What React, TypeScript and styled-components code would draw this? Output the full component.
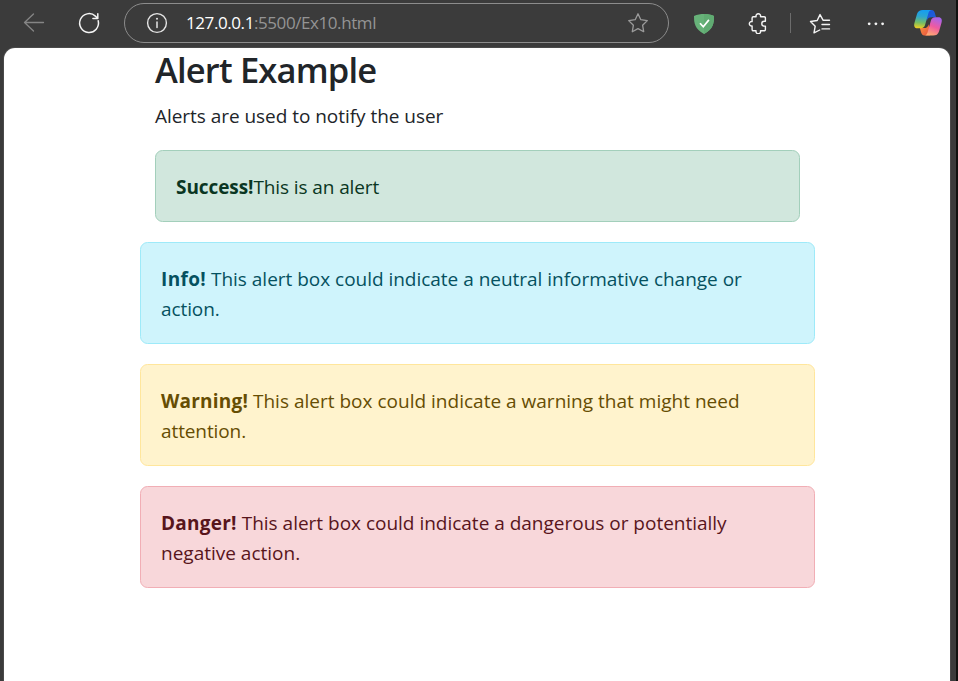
import React from "react";
import styled, { createGlobalStyle, css } from "styled-components";

const GlobalStyle = createGlobalStyle`
  *, *::before, *::after { box-sizing: border-box; }
  body {
    margin: 0;
    background: #3b3b3b;
    overflow: hidden;
    font-family: "Open Sans", "Noto Sans", sans-serif;
  }
`;

const Window = styled.div`
  display: flex;
  flex-direction: column;
  width: 958px;
  height: 681px;
  background: #3b3b3b;
  border-right: 2px solid #11110f;
`;

const Toolbar = styled.header`
  flex: none;
  display: flex;
  align-items: center;
  height: 48px;
  padding: 0 12px 2px 22px;
`;

const IconButton = styled.button<{ $gap?: number; $color?: string }>`
  flex: none;
  display: flex;
  padding: 0;
  border: 0;
  background: none;
  color: ${(p) => p.$color ?? "#f4f4f4"};
  margin-left: ${(p) => p.$gap ?? 0}px;
`;

const AddressBar = styled.div`
  flex: none;
  display: flex;
  align-items: center;
  width: 545px;
  height: 40px;
  margin-left: 23px;
  padding: 0 19px 0 21px;
  border: 1.5px solid #8c8c8c;
  border-radius: 20px;
  color: #e6e6e6;
`;

const Url = styled.div`
  flex: 1;
  margin-left: 18px;
  font-size: 17px;
  line-height: 24px;
  letter-spacing: -0.42px;
  white-space: nowrap;
  color: #949494;
`;

const Host = styled.span`
  color: #ffffff;
`;

const Divider = styled.div`
  width: 1px;
  height: 20px;
  margin-left: 21px;
  background: #6c6c6c;
`;

const Page = styled.main`
  flex: 1;
  margin: 0 6px 0 4px;
  padding-left: 136px;
  background: #ffffff;
  border-radius: 11px 11px 0 0;
  box-shadow: 0 0 0 1px #4a4a4a;
`;

const Container = styled.div`
  width: 675px;
`;

const Intro = styled.section`
  padding: 0 15px;
`;

const Title = styled.h2`
  height: 42px;
  margin: 0 0 10px;
  padding-top: 1px;
  font-size: 34.5px;
  font-weight: 600;
  line-height: 42px;
  letter-spacing: -0.82px;
  color: #212529;
`;

const Lead = styled.p`
  margin: 0 0 20px;
  padding-top: 1px;
  height: 30px;
  font-size: 19px;
  line-height: 30px;
  letter-spacing: -0.04px;
  color: #212529;
`;

type Tone = "success" | "info" | "warning" | "danger";

const tones: Record<Tone, [string, string, string]> = {
  success: ["#d1e7dd", "#a3cfbb", "#0a3622"],
  info: ["#cff4fc", "#9eeaf9", "#055160"],
  warning: ["#fff3cd", "#ffe69c", "#664d03"],
  danger: ["#f8d7da", "#f1aeb5", "#58151c"],
};

const Alert = styled.div<{ $tone: Tone }>`
  margin-bottom: 20px;
  padding: 21px 20px 19px;
  border: 1px solid;
  border-radius: 7.5px;
  font-size: 19px;
  line-height: 30px;
  ${({ $tone }) => css`
    background: ${tones[$tone][0]};
    border-color: ${tones[$tone][1]};
    color: ${tones[$tone][2]};
  `}
`;

const Strong = styled.strong<{ $tracking?: number }>`
  font-weight: 700;
  letter-spacing: ${(p) => p.$tracking ?? 0}px;
`;

const Line = styled.span<{ $tracking?: number }>`
  display: block;
  white-space: nowrap;
  letter-spacing: ${(p) => p.$tracking ?? 0}px;
`;

const stroke = {
  fill: "none",
  stroke: "currentColor",
  strokeWidth: 1.3,
  strokeLinecap: "round" as const,
  strokeLinejoin: "round" as const,
};

const BackIcon = () => (
  <svg width="24" height="24" viewBox="0 0 24 24" {...stroke}>
    <path d="M21.5 11.500H2.500M11.500 3L2.500 11.500l9 8.500" />
  </svg>
);

const ReloadIcon = () => (
  <svg width="24" height="24" viewBox="0 0 24 24" {...stroke} strokeWidth={1.5}>
    <path d="M21.2 9.8A9.4 9.4 0 1 1 18.4 5.1L20.7 7.2M20.8 2.8v4.7h-4.9" />
  </svg>
);

const InfoIcon = () => (
  <svg width="22" height="22" viewBox="0 0 22 22" {...stroke} strokeWidth={1.4}>
    <circle cx="11" cy="11" r="9.4" />
    <path d="M11 10v5.5" strokeWidth="1.5" />
    <circle cx="11" cy="6.8" r="1" fill="currentColor" stroke="none" />
  </svg>
);

const StarIcon = () => (
  <svg width="22" height="22" viewBox="0 0 22 22" {...stroke}>
    <path d="M11 1.8l2.8 5.9 6.5.9-4.7 4.6 1.1 6.5-5.7-3.1-5.7 3.1 1.1-6.5-4.7-4.6 6.5-.9z" />
  </svg>
);

const ShieldIcon = () => (
  <svg width="22" height="22" viewBox="0 0 22 22">
    <path d="M11 2c3.400 0 7 .600 10 2 0 7.200-.7 13-10 17.900C1.700 17 1 11.200 1 4c3-1.400 6.600-2 10-2z" fill="#67b279" />
    <path d="M11 2c3.400 0 7 .600 10 2 0 7.200-.7 13-10 17.900z" fill="#60ab72" />
    <path d="M7 11.200l3.300 3.600 5.600-6.900" fill="none" stroke="#fff" strokeWidth="1.700" />
  </svg>
);

const PuzzleIcon = () => (
  <svg width="22" height="22" viewBox="0 0 22 22" {...stroke} strokeWidth={1.4}>
    <path d="M6.300 4.700h2.800a2.300 2.300 0 1 1 4.400 0h3.700a1.200 1.200 0 0 1 1.200 1.200v3.400h-1.200a2.400 2.400 0 0 0 0 4.800h1.200v3.500a1.200 1.200 0 0 1-1.200 1.200h-3.700a2.300 2.300 0 1 1-4.400 0H6.300a1.200 1.200 0 0 1-1.200-1.200v-3.600a2.300 2.300 0 1 1 0-4.500V5.900a1.200 1.200 0 0 1 1.200-1.200z" />
  </svg>
);

const FavoritesIcon = () => (
  <svg width="22" height="22" viewBox="0 0 22 22" {...stroke} strokeWidth={1.4}>
    <path d="M20.500 8.300h-6.300L11 2.600 8.200 8.500l-6.700 1 4.700 4.700L5 20.900l5.700-2.900M13 12.500h7.500M13 16.900h7.500" />
  </svg>
);

const MoreIcon = () => (
  <svg width="20" height="20" viewBox="0 0 20 20" fill="currentColor">
    <circle cx="3.200" cy="10.800" r="1.400" />
    <circle cx="9.900" cy="10.800" r="1.400" />
    <circle cx="16.600" cy="10.800" r="1.400" />
  </svg>
);

const CopilotIcon = () => (
  <svg width="30" height="28" viewBox="0 0 30 28">
    <defs>
      <linearGradient id="cool" x1="0.4" y1="0" x2="0.3" y2="1">
        <stop offset="0" stopColor="#159df2" />
        <stop offset="0.350" stopColor="#2da6cf" />
        <stop offset="0.700" stopColor="#78bd62" />
        <stop offset="1" stopColor="#f2cf22" />
      </linearGradient>
      <linearGradient id="warm" x1="0.700" y1="0" x2="0.300" y2="1">
        <stop offset="0" stopColor="#a565ee" />
        <stop offset="0.500" stopColor="#ef5aa0" />
        <stop offset="1" stopColor="#ffad70" />
      </linearGradient>
      <linearGradient id="navy" x1="0" y1="0" x2="1" y2="1">
        <stop offset="0" stopColor="#1b55d9" />
        <stop offset="1" stopColor="#2060d8" />
      </linearGradient>
      <linearGradient id="ember" x1="0" y1="0" x2="1" y2="1">
        <stop offset="0" stopColor="#f8963d" />
        <stop offset="1" stopColor="#e94f40" />
      </linearGradient>
    </defs>
    <path d="M13 1h5.500c2.200 0 2.900 1.400 3.600 3.900l1 3.300h-4.500c-2.600 0-4 1-4.800 3.500z" fill="url(#navy)" />
    <path d="M17 26.500h-5.500c-2.100 0-2.900-1.300-3.600-3.700l-1-3.700h4c2.700 0 4-1.200 4.800-3.900z" fill="url(#ember)" />
    <path d="M9.800 1h8.700c-1.900.2-2.700 1.700-3.400 4.300l-2.900 10.300c-.7 2.500-2 3.700-4.500 3.700H4.600C1.500 19.300.600 17 1.500 13.700L4 5.100C4.900 2.200 6.900 1 9.800 1z" fill="url(#cool)" />
    <path d="M20.200 26.500h-8.700c1.900-.2 2.700-1.700 3.400-4.300l2.900-10.300c.7-2.500 2-3.700 4.500-3.700h3.100c3.100 0 4 2.300 3.100 5.600L26 22.400c-.9 2.900-2.900 4.100-5.800 4.100z" fill="url(#warm)" />
  </svg>
);

export default function App() {
  return (
    <>
      <GlobalStyle />
      <Window>
        <Toolbar>
          <IconButton aria-label="Back" $color="#858585"><BackIcon /></IconButton>
          <IconButton aria-label="Refresh" $gap={31}><ReloadIcon /></IconButton>
          <AddressBar>
            <InfoIcon />
            <Url><Host>127.0.0.1</Host>:5500/Ex10.html</Url>
            <IconButton aria-label="Add to favorites" $color="#9b9b9b"><StarIcon /></IconButton>
          </AddressBar>
          <IconButton aria-label="Protection" $gap={24}><ShieldIcon /></IconButton>
          <IconButton aria-label="Extensions" $gap={32}><PuzzleIcon /></IconButton>
          <Divider />
          <IconButton aria-label="Favorites" $gap={18}><FavoritesIcon /></IconButton>
          <IconButton aria-label="More" $gap={35}><MoreIcon /></IconButton>
          <IconButton aria-label="Copilot" $gap={27}><CopilotIcon /></IconButton>
        </Toolbar>
        <Page>
          <Container>
            <Intro>
              <Title>Alert Example</Title>
              <Lead>Alerts are used to notify the user</Lead>
              <Alert $tone="success">
                <Line $tracking={-0.1}><Strong $tracking={-0.08}>Success!</Strong>This is an alert</Line>
              </Alert>
            </Intro>
            <Alert $tone="info">
              <Line $tracking={-0.02}><Strong $tracking={0.35}>Info!</Strong> This alert box could indicate a neutral informative change or</Line>
              <Line $tracking={-0.1}>action.</Line>
            </Alert>
            <Alert $tone="warning">
              <Line $tracking={0.01}><Strong $tracking={0.2}>Warning!</Strong> This alert box could indicate a warning that might need</Line>
              <Line $tracking={-0.1}>attention.</Line>
            </Alert>
            <Alert $tone="danger">
              <Line $tracking={-0.01}><Strong $tracking={0.25}>Danger!</Strong> This alert box could indicate a dangerous or potentially</Line>
              <Line>negative action.</Line>
            </Alert>
          </Container>
        </Page>
      </Window>
    </>
  );
}
